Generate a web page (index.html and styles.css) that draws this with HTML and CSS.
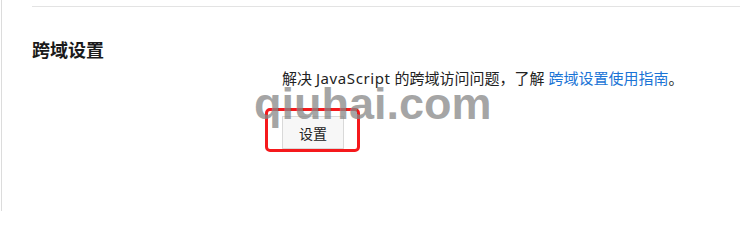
FILE: index.html
```html
<!DOCTYPE html>
<html lang="zh-CN">
<head>
<meta charset="utf-8">
<title>跨域设置</title>
<link rel="stylesheet" href="styles.css">
</head>
<body>
<div class="panel">
  <div class="divider"></div>
  <section class="section">
    <h2 class="section-title">跨域设置</h2>
    <div class="section-body">
      <p class="desc">解决 <span class="latin">JavaScript</span> 的跨域访问问题，了解 <a class="link" href="#">跨域设置使用指南</a>。</p>
      <div class="btn-wrap">
        <button class="btn" type="button">设置</button>
        <span class="highlight"></span>
      </div>
    </div>
  </section>
  <div class="watermark">qiuhai.com</div>
</div>
</body>
</html>
```

FILE: styles.css
```css
html, body {
  margin: 0;
  padding: 0;
  background: #fff;
}

body {
  font-family: "Noto Sans", "Noto Sans CJK SC", sans-serif;
  color: #222;
  width: 740px;
  height: 211px;
  overflow: hidden;
}

.panel {
  position: relative;
  margin-left: 1px;
  height: 211px;
  border-left: 1px solid #dcdcdc;
  padding-left: 30px;
  padding-top: 6px;
  box-sizing: border-box;
}

.divider {
  height: 1px;
  background: #e3e3e3;
}

.section {
  padding-top: 29px;
}

.section-title {
  margin: 0;
  font-family: "Noto Sans CJK SC", sans-serif;
  font-size: 18px;
  font-weight: 700;
  line-height: 26px;
  color: #1a1a1a;
}

.section-body {
  padding-left: 250px;
  padding-top: 5px;
}

.desc {
  margin: 0;
  font-size: 15px;
  line-height: 22px;
  color: #222;
}

.latin {
  font-size: 15px;
  letter-spacing: 0.6px;
}

.link {
  color: #1b74d6;
  text-decoration: none;
}

.btn-wrap {
  position: relative;
  margin-top: 27px;
  width: 62px;
}

.btn {
  display: block;
  width: 62px;
  height: 33px;
  padding: 0;
  border: 1px solid #d9d9d9;
  background: #f7f7f7;
  font-family: "Noto Sans CJK SC", sans-serif;
  font-size: 14px;
  color: #222;
  border-radius: 0;
}

.highlight {
  position: absolute;
  left: -17px;
  top: -8px;
  width: 95px;
  height: 44px;
  border: 3px solid #f5191c;
  border-radius: 5px;
  box-sizing: border-box;
}

.watermark {
  position: absolute;
  left: 252px;
  top: 78px;
  font-family: "Liberation Sans", sans-serif;
  font-weight: 700;
  font-size: 45px;
  line-height: 52px;
  color: rgba(135, 135, 135, 0.75);
  pointer-events: none;
}
```
